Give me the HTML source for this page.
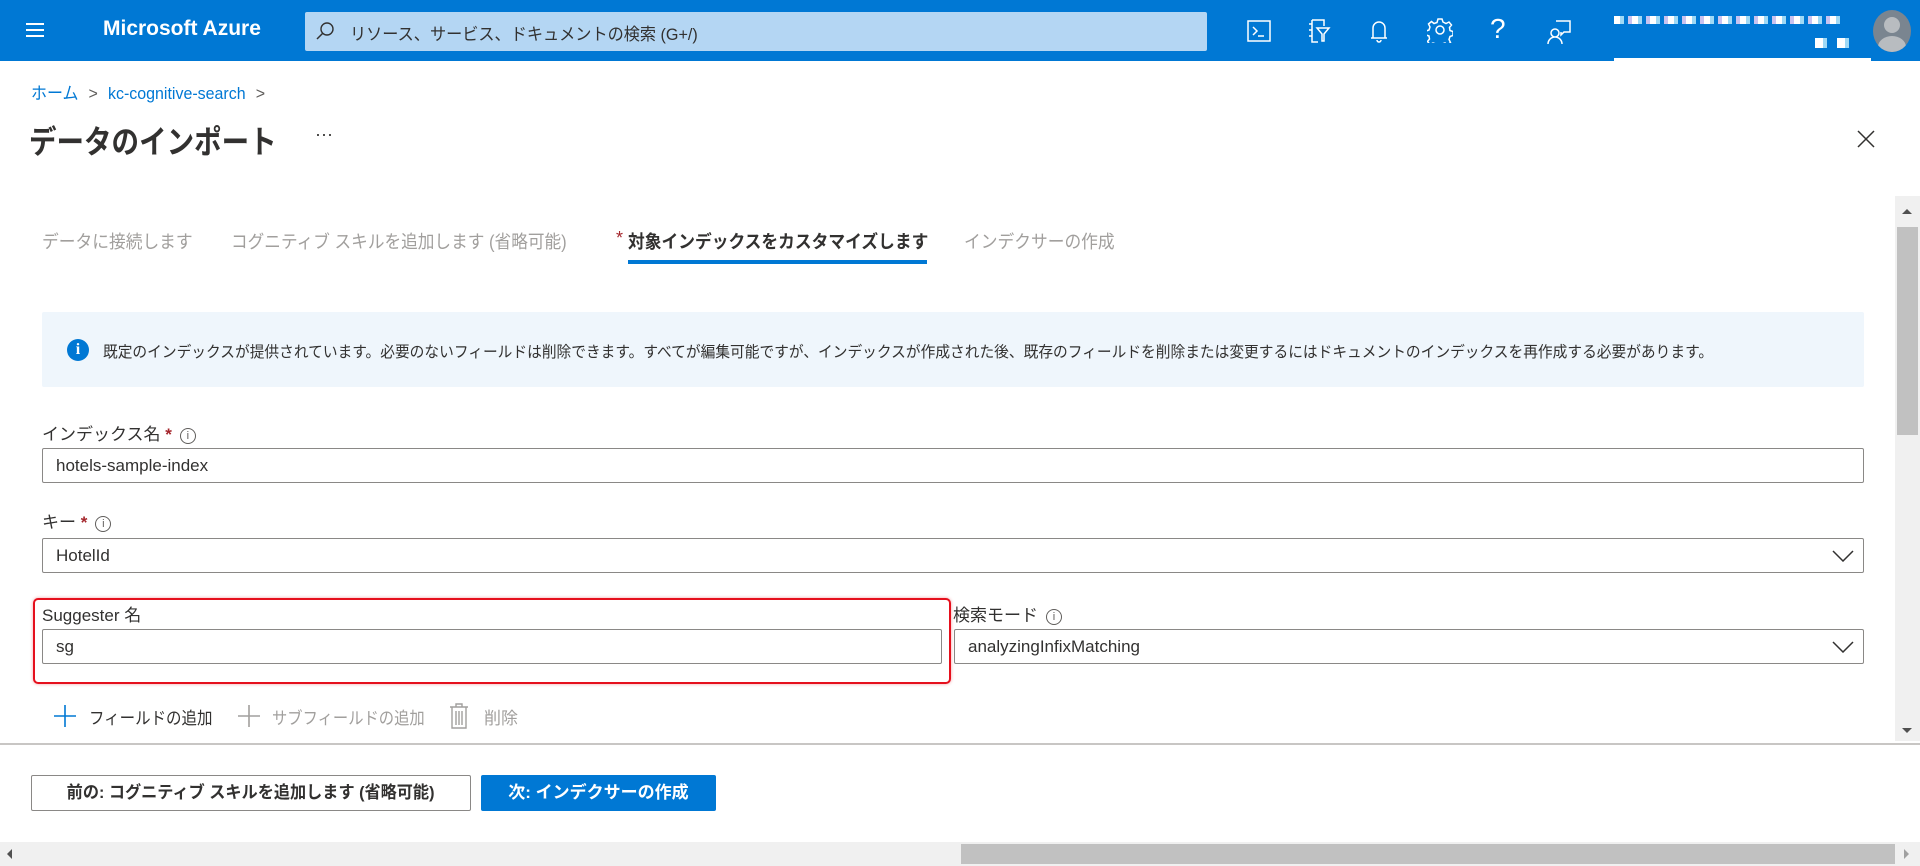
<!DOCTYPE html>
<html><head><meta charset="utf-8"><style>
*{box-sizing:border-box;margin:0;padding:0}
body{width:1920px;height:866px;overflow:hidden;background:#fff;font-family:"Liberation Sans","Noto Sans CJK JP",sans-serif;color:#323130;position:relative}
.a{position:absolute}
.hdr{left:0;top:0;width:1920px;height:61px;background:#0078d4}
.t{white-space:nowrap;transform-origin:0 0}
.inp{border:1px solid #8a8886;border-radius:2px;background:#fff;height:35px;font-size:17px;padding-left:13px;line-height:33px;color:#323130}
.lbl{font-size:17px;color:#323130}
.req{color:#a4262c;font-weight:bold}
.ic{display:inline-block;width:16px;height:16px;border:1px solid #605e5c;border-radius:50%;font-size:11px;line-height:14px;text-align:center;color:#605e5c;vertical-align:middle;margin-left:8px}
</style></head><body>
<div class="a hdr"></div>
<div class="a" style="left:26px;top:23px;width:18px;height:2px;background:#fff;box-shadow:0 6px 0 #fff,0 12px 0 #fff"></div>
<div class="a t" style="left:103px;top:17px;font-size:21px;color:#fff;font-weight:600">Microsoft Azure</div>
<div class="a" style="left:305px;top:12px;width:902px;height:39px;background:#b4d6f3;border-radius:2px"></div>
<svg class="a" style="left:315px;top:21px" width="20" height="20" viewBox="0 0 20 20"><circle cx="12" cy="8" r="6" fill="none" stroke="#323130" stroke-width="1.4"/><path d="M8 12L2 18" stroke="#323130" stroke-width="1.5"/></svg>
<div class="a t" style="left:350px;top:20px;font-size:17px;color:#323130;transform:scaleX(0.95)">リソース、サービス、ドキュメントの検索 (G+/)</div>
<svg class="a" style="left:1246px;top:18px" width="26" height="26" viewBox="0 0 26 26" fill="none" stroke="#fff" stroke-width="1.5"><rect x="2" y="3" width="22" height="20"/><path d="M7 9l4 4-4 4M12 18h6"/></svg>
<svg class="a" style="left:1306px;top:17px" width="26" height="28" viewBox="0 0 26 28" fill="none" stroke="#fff" stroke-width="1.5"><path d="M6 3h12v6M6 3v22h6M3 7h3M3 13h3M3 19h3M11 11h12l-5 6v7h-2v-7z"/></svg>
<svg class="a" style="left:1367px;top:17px" width="24" height="28" viewBox="0 0 24 28" fill="none" stroke="#fff" stroke-width="1.5"><path d="M6 21V11a6 6 0 0 1 12 0v10zM4 21h16M10 23a2 2 0 0 0 4 0"/></svg>
<svg class="a" style="left:1427px;top:17px" width="26" height="26" viewBox="0 0 26 26" fill="none" stroke="#fff" stroke-width="1.5"><circle cx="13" cy="13" r="4"/><path d="M11 2h4l1 3 3 1.5 3-1.5 2.5 3-2 2.5.5 3 3 1v4l-3 1-1 3 1.5 3-3 2.5-2.5-2-3 1-1 3h-4l-1-3-3-1-3 1.5-2.5-3 2-2.5-.5-3-3-1v-4l3-1 1-3-1.5-3 3-2.5 2.5 2 3-1z"/></svg>
<div class="a t" style="left:1490px;top:13px;font-size:28px;color:#fff;font-weight:300">?</div>
<svg class="a" style="left:1546px;top:17px" width="26" height="28" viewBox="0 0 26 28" fill="none" stroke="#fff" stroke-width="1.5"><path d="M10 4h14v11h-6l-3 3v-3M9 12a4 4 0 1 1 0 8 4 4 0 0 1 0-8zM2 27a7 7 0 0 1 14 0"/></svg>
<div class="a" style="left:1614px;top:16px;width:230px;height:8px;background:repeating-linear-gradient(90deg,#fff 0 6px,#9fd9f6 6px 10px,#0078d4 10px 14px,#c9c3f0 14px 18px)"></div>
<div class="a" style="left:1815px;top:38px;width:40px;height:10px;background:repeating-linear-gradient(90deg,#fff 0 8px,#9fd9f6 8px 12px,#0078d4 12px 22px)"></div>
<div class="a" style="left:1614px;top:58px;width:257px;height:3px;background:#fff"></div>
<div class="a" style="left:1873px;top:10px;width:38px;height:42px;border-radius:50%;background:#7a8590;overflow:hidden"><div style="position:absolute;left:11px;top:7px;width:16px;height:16px;border-radius:50%;background:#b8bcc0"></div><div style="position:absolute;left:5px;top:26px;width:28px;height:22px;border-radius:50%;background:#b8bcc0"></div></div>
<div class="a t" style="left:31px;top:79px;font-size:17px;color:#0078d4;transform:scaleX(0.94)">ホーム <span style="color:#605e5c;margin:0 6px">&gt;</span> kc-cognitive-search <span style="color:#605e5c;margin-left:6px">&gt;</span></div>
<div class="a t" style="left:29px;top:117px;font-size:32px;font-weight:600;color:#323130;transform:scaleX(0.86)">データのインポート</div>
<div class="a t" style="left:315px;top:124px;font-size:18px;color:#323130">···</div>
<svg class="a" style="left:1857px;top:130px" width="18" height="18" viewBox="0 0 18 18"><path d="M1 1l16 16M17 1L1 17" stroke="#323130" stroke-width="1.5"/></svg>
<div class="a t" style="left:42px;top:228px;font-size:18px;color:#a19f9d;transform:scaleX(0.93)">データに接続します</div>
<div class="a t" style="left:231px;top:228px;font-size:18px;color:#a19f9d;transform:scaleX(0.925)">コグニティブ スキルを追加します (省略可能)</div>
<div class="a t" style="left:616px;top:228px;font-size:18px;color:#a4262c">*</div>
<div class="a t" style="left:628px;top:228px;font-size:18px;color:#323130;font-weight:600;transform:scaleX(0.93)">対象インデックスをカスタマイズします</div>
<div class="a" style="left:628px;top:260px;width:299px;height:4px;background:#0078d4"></div>
<div class="a t" style="left:964px;top:228px;font-size:18px;color:#a19f9d;transform:scaleX(0.93)">インデクサーの作成</div>
<div class="a" style="left:42px;top:312px;width:1822px;height:75px;background:#eff6fc;border-radius:2px"></div>
<div class="a" style="left:67px;top:339px;width:22px;height:22px;border-radius:50%;background:#0078d4;color:#fff;font-weight:bold;font-size:16px;text-align:center;line-height:22px;font-family:'Liberation Serif',serif">i</div>
<div class="a t" style="left:103px;top:340px;font-size:15.3px;color:#323130;transform:scaleX(0.962)">既定のインデックスが提供されています。必要のないフィールドは削除できます。すべてが編集可能ですが、インデックスが作成された後、既存のフィールドを削除または変更するにはドキュメントのインデックスを再作成する必要があります。</div>
<div class="a t lbl" style="left:42px;top:420px">インデックス名 <span class="req">*</span><span class="ic">i</span></div>
<div class="a inp" style="left:42px;top:448px;width:1822px">hotels-sample-index</div>
<div class="a t lbl" style="left:42px;top:508px">キー <span class="req">*</span><span class="ic">i</span></div>
<div class="a inp" style="left:42px;top:538px;width:1822px">HotelId</div>
<svg class="a" style="left:1832px;top:550px" width="22" height="12" viewBox="0 0 22 12"><path d="M1 1l10 10L21 1" fill="none" stroke="#323130" stroke-width="1.5"/></svg>
<div class="a" style="left:33px;top:598px;width:918px;height:86px;border:2px solid #e5101d;border-radius:5px;box-shadow:0 0 3px rgba(229,16,29,.4)"></div>
<div class="a t lbl" style="left:42px;top:601px">Suggester 名</div>
<div class="a inp" style="left:42px;top:629px;width:900px">sg</div>
<div class="a t lbl" style="left:953px;top:601px">検索モード<span class="ic">i</span></div>
<div class="a inp" style="left:954px;top:629px;width:910px">analyzingInfixMatching</div>
<svg class="a" style="left:1832px;top:641px" width="22" height="12" viewBox="0 0 22 12"><path d="M1 1l10 10L21 1" fill="none" stroke="#323130" stroke-width="1.5"/></svg>
<svg class="a" style="left:53px;top:704px" width="24" height="24"><path d="M12 1v22M1 12h22" stroke="#0078d4" stroke-width="1.6"/></svg>
<div class="a t" style="left:89px;top:704px;font-size:17px;color:#323130;transform:scaleX(0.91)">フィールドの追加</div>
<svg class="a" style="left:237px;top:704px" width="24" height="24"><path d="M12 1v22M1 12h22" stroke="#a19f9d" stroke-width="1.6"/></svg>
<div class="a t" style="left:272px;top:704px;font-size:17px;color:#a19f9d;transform:scaleX(0.9)">サブフィールドの追加</div>
<svg class="a" style="left:449px;top:703px" width="20" height="26" viewBox="0 0 20 26" fill="none" stroke="#a19f9d" stroke-width="1.4"><path d="M1 4h18M7 4V1h6v3M3 4v21h14V4M7 8v14M10 8v14M13 8v14"/></svg>
<div class="a t" style="left:484px;top:704px;font-size:17px;color:#a19f9d">削除</div>
<div class="a" style="left:1895px;top:196px;width:25px;height:545px;background:#f0f0f0"></div>
<div class="a" style="left:1897px;top:227px;width:21px;height:208px;background:#c1c1c1"></div>
<div class="a" style="left:1902px;top:209px;width:0;height:0;border:5px solid transparent;border-bottom:5px solid #505050;border-top:0"></div>
<div class="a" style="left:1902px;top:728px;width:0;height:0;border:5px solid transparent;border-top:5px solid #505050;border-bottom:0"></div>
<div class="a" style="left:0;top:743px;width:1920px;height:2px;background:#c8c6c4"></div>
<div class="a" style="left:31px;top:775px;width:440px;height:36px;border:1px solid #8a8886;border-radius:2px;text-align:center;line-height:34px;font-size:17px;font-weight:600;color:#323130;white-space:nowrap"><span style="display:inline-block;transform:scaleX(0.95)">前の: コグニティブ スキルを追加します (省略可能)</span></div>
<div class="a" style="left:481px;top:775px;width:235px;height:36px;background:#0078d4;border-radius:2px;text-align:center;line-height:36px;font-size:17px;font-weight:600;color:#fff;white-space:nowrap">次: インデクサーの作成</div>
<div class="a" style="left:0;top:842px;width:1920px;height:24px;background:#f0f0f0"></div>
<div class="a" style="left:961px;top:844px;width:934px;height:20px;background:#c1c1c1"></div>
<div class="a" style="left:7px;top:849px;width:0;height:0;border:5px solid transparent;border-right:5px solid #505050;border-left:0"></div>
<div class="a" style="left:1904px;top:849px;width:0;height:0;border:5px solid transparent;border-left:5px solid #a0a0a0;border-right:0"></div>
</body></html>
